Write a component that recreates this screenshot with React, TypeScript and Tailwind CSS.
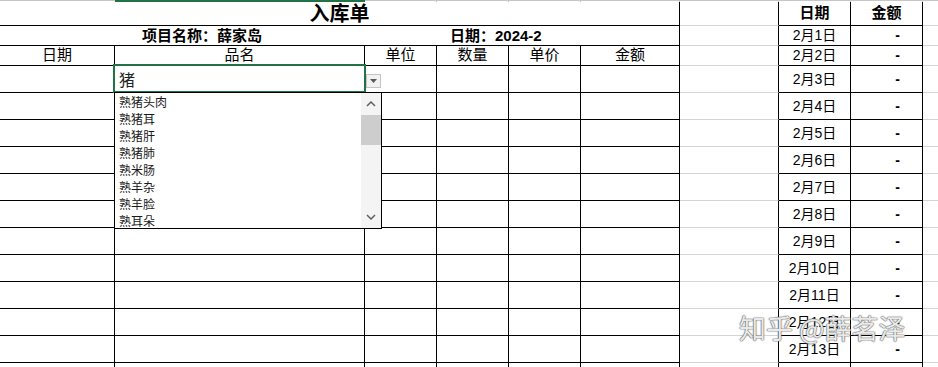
import React from "react";

const W = {
  A: "w-[115px]",
  B: "w-[250px]",
  C: "w-[72px]",
  D: "w-[72px]",
  E: "w-[72px]",
  F: "w-[99px]",
  G: "w-[99px]",
  H: "w-[72px]",
  I: "w-[72px]",
};

const dates = [
  "2月3日",
  "2月4日",
  "2月5日",
  "2月6日",
  "2月7日",
  "2月8日",
  "2月9日",
  "2月10日",
  "2月11日",
  "2月12日",
  "2月13日",
  "",
];

const items = ["熟猪头肉", "熟猪耳", "熟猪肝", "熟猪肺", "熟米肠", "熟羊杂", "熟羊脸", "熟耳朵"];

function RightCells({ date, bold }: { date: string; bold?: boolean }) {
  return (
    <>
      <div className={`${W.G} shrink-0 border-r border-b border-r-black border-b-[#d4d4d4]`} />
      <div
        className={`${W.H} shrink-0 border-r border-b border-black flex items-center justify-center text-[14px] ${
          bold ? "font-bold text-[15px]" : ""
        }`}
      >
        {date}
      </div>
      <div
        className={`${W.I} shrink-0 border-r border-b border-black flex items-center ${
          bold ? "justify-center font-bold text-[15px]" : "justify-end pr-[22px] font-bold text-[14px]"
        }`}
      >
        {bold ? "金额" : date ? "-" : ""}
      </div>
      <div className="flex-1 border-b border-[#d4d4d4]" />
    </>
  );
}

export default function App() {
  return (
    <div className="relative w-[938px] h-[367px] overflow-hidden bg-white text-black font-['Liberation_Sans','Noto_Sans_CJK_SC',sans-serif]">
      {/* column header bottom strip */}
      <div className="flex h-[2px]">
        <div className={`${W.A} shrink-0 border-t border-[#c6c6c6]`} />
        <div className={`${W.B} shrink-0 bg-[#217346]`} />
        <div className={`${W.C} shrink-0 border-t border-r border-[#c6c6c6]`} />
        <div className={`${W.D} shrink-0 border-t border-r border-[#c6c6c6]`} />
        <div className={`${W.E} shrink-0 border-t border-r border-[#c6c6c6]`} />
        <div className={`${W.F} shrink-0 border-t border-r border-[#c6c6c6]`} />
        <div className={`${W.G} shrink-0 border-t border-r border-[#c6c6c6]`} />
        <div className={`${W.H} shrink-0 border-t border-r border-[#c6c6c6]`} />
        <div className={`${W.I} shrink-0 border-t border-r border-[#c6c6c6]`} />
        <div className="flex-1 border-t border-[#c6c6c6]" />
      </div>

      {/* title row */}
      <div className="flex h-[24px]">
        <div className="w-[680px] shrink-0 border-r border-b border-black flex items-center justify-center text-[20px] font-bold leading-none">
          入库单
        </div>
        <RightCells date="日期" bold />
      </div>

      {/* project row */}
      <div className="flex h-[20px]">
        <div className="w-[680px] shrink-0 border-r border-b border-black flex items-center text-[15px] font-bold leading-none">
          <span className="ml-[142px] w-[308px]">项目名称：薛家岛</span>
          <span>日期：2024-2</span>
        </div>
        <RightCells date="2月1日" />
      </div>

      {/* header row */}
      <div className="flex h-[20px] text-[15px]">
        {[
          ["日期", W.A],
          ["品名", W.B],
          ["单位", W.C],
          ["数量", W.D],
          ["单价", W.E],
          ["金额", W.F],
        ].map(([t, w]) => (
          <div key={t + w} className={`${w} shrink-0 border-r border-b border-black flex items-center justify-center`}>
            {t}
          </div>
        ))}
        <RightCells date="2月2日" />
      </div>

      {/* data rows */}
      {dates.map((d, idx) => (
        <div key={idx} className="flex h-[27px]">
          {[W.A, W.B, W.C, W.D, W.E, W.F].map((w, i) => (
            <div key={i} className={`${w} shrink-0 border-r border-b border-black`} />
          ))}
          <RightCells date={d} />
        </div>
      ))}

      {/* selected cell */}
      <div className="absolute left-[113px] top-[64px] w-[253px] h-[29px] border-2 border-[#217346] bg-white flex items-center pl-[4px] text-[16px] font-['Noto_Sans_CJK_SC',sans-serif] text-[#222]">
        猪
      </div>

      {/* dropdown button */}
      <div className="absolute left-[366px] top-[74px] w-[15px] h-[14px] border border-[#c4c4c4] bg-[#f2f2f2] flex items-center justify-center">
        <svg width="7" height="4" viewBox="0 0 7 4">
          <path d="M0 0 H7 L3.5 4 Z" fill="#5a5a5a" />
        </svg>
      </div>

      {/* dropdown list */}
      <div className="absolute left-[114px] top-[92px] w-[268px] h-[137px] border border-black bg-white flex">
        <div className="flex-1 flex flex-col pl-[4px] text-[12px] leading-[17px] text-[#1a1a1a] font-['Noto_Sans_CJK_SC',sans-serif]">
          {items.map((it) => (
            <div key={it} className="h-[17px]">
              {it}
            </div>
          ))}
        </div>
        <div className="w-[20px] bg-[#f4f4f4] flex flex-col items-center">
          <div className="h-[22px] flex items-center justify-center">
            <svg width="10" height="6" viewBox="0 0 10 6">
              <path d="M1 5 L5 1 L9 5" fill="none" stroke="#606060" strokeWidth="1.5" />
            </svg>
          </div>
          <div className="w-full h-[30px] bg-[#cdcdcd]" />
          <div className="flex-1" />
          <div className="h-[22px] flex items-center justify-center">
            <svg width="10" height="6" viewBox="0 0 10 6">
              <path d="M1 1 L5 5 L9 1" fill="none" stroke="#606060" strokeWidth="1.5" />
            </svg>
          </div>
        </div>
      </div>

      {/* watermark */}
      <div className="absolute left-[739px] top-[312px] text-[27px] leading-[32px] text-[rgba(255,255,255,0.9)] font-['Noto_Sans_CJK_SC',sans-serif] [text-shadow:0_0_1px_#555,0_0_1px_#555,0_0_2px_#999] whitespace-nowrap">
        知乎 @薛茗泽
      </div>
    </div>
  );
}
